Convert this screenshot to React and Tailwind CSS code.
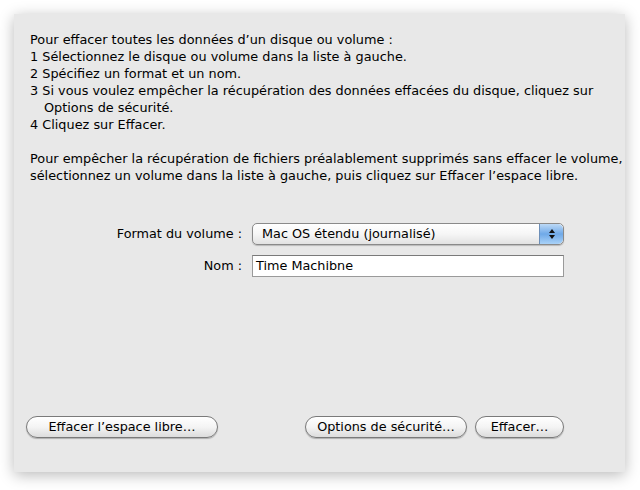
import React from 'react';

const font = { fontFamily: '"DejaVu Sans", "Liberation Sans", sans-serif' };

const PillButton = ({ children, className = '' }) => (
  <button
    className={`h-[22px] rounded-full border border-[#7a7a7a] bg-gradient-to-b from-white via-[#f4f4f4] to-[#dcdcdc] text-[12.8px] text-black shadow-[0_1px_1px_rgba(0,0,0,0.25)] ${className}`}
  >
    {children}
  </button>
);

const Stepper = () => (
  <div className="flex h-full w-[24px] items-center justify-center rounded-r-[5px] bg-gradient-to-b from-[#bcd9f6] via-[#6fa9e8] to-[#a9d2f8] border-l border-[#6d8fb8]">
    <svg width="8" height="12" viewBox="0 0 8 12">
      <path d="M4 1 L7 5 L1 5 Z" fill="#111" />
      <path d="M4 11 L7 7 L1 7 Z" fill="#111" />
    </svg>
  </div>
);

export default function App() {
  return (
    <div className="h-[490px] w-[640px] bg-white p-[14px] pr-[15px] pb-[18px]" style={font}>
      <div className="flex h-full flex-col bg-[#e8e8e8] shadow-[0_3px_14px_rgba(0,0,0,0.28)] px-[16px] pt-[17px]">
        <div className="whitespace-nowrap text-[12.85px] leading-[17px] text-black">
          <p>Pour effacer toutes les données d’un disque ou volume :</p>
          <p>1 Sélectionnez le disque ou volume dans la liste à gauche.</p>
          <p>2 Spécifiez un format et un nom.</p>
          <p>3 Si vous voulez empêcher la récupération des données effacées du disque, cliquez sur</p>
          <p className="pl-[14px]">Options de sécurité.</p>
          <p>4 Cliquez sur Effacer.</p>
          <p className="mt-[17px]">
            Pour empêcher la récupération de fichiers préalablement supprimés sans effacer le volume,
          </p>
          <p>sélectionnez un volume dans la liste à gauche, puis cliquez sur Effacer l’espace libre.</p>
        </div>

        <div className="mt-[39px] grid grid-cols-[212px_312px] items-center gap-x-[10px] gap-y-[10px] text-[12.8px]">
          <span className="text-right">Format du volume :</span>
          <div className="flex h-[22px] items-stretch overflow-hidden rounded-[5px] border border-[#8a8a8a] bg-gradient-to-b from-white via-[#f6f6f6] to-[#e2e2e2] shadow-[0_1px_1px_rgba(0,0,0,0.2)]">
            <span className="flex-1 pl-[9px] leading-[20px]">Mac OS étendu (journalisé)</span>
            <Stepper />
          </div>
          <span className="text-right">Nom :</span>
          <div className="h-[22px] border border-[#9a9a9a] border-t-[#7a7a7a] bg-white pl-[3px] leading-[20px]">
            Time Machibne
          </div>
        </div>

        <div className="mt-auto mb-[34px] -ml-[4px] flex items-center">
          <PillButton className="w-[192px]">Effacer l’espace libre…</PillButton>
          <PillButton className="ml-[87px] w-[162px]">Options de sécurité…</PillButton>
          <PillButton className="ml-[8px] w-[89px]">Effacer…</PillButton>
        </div>
      </div>
    </div>
  );
}
